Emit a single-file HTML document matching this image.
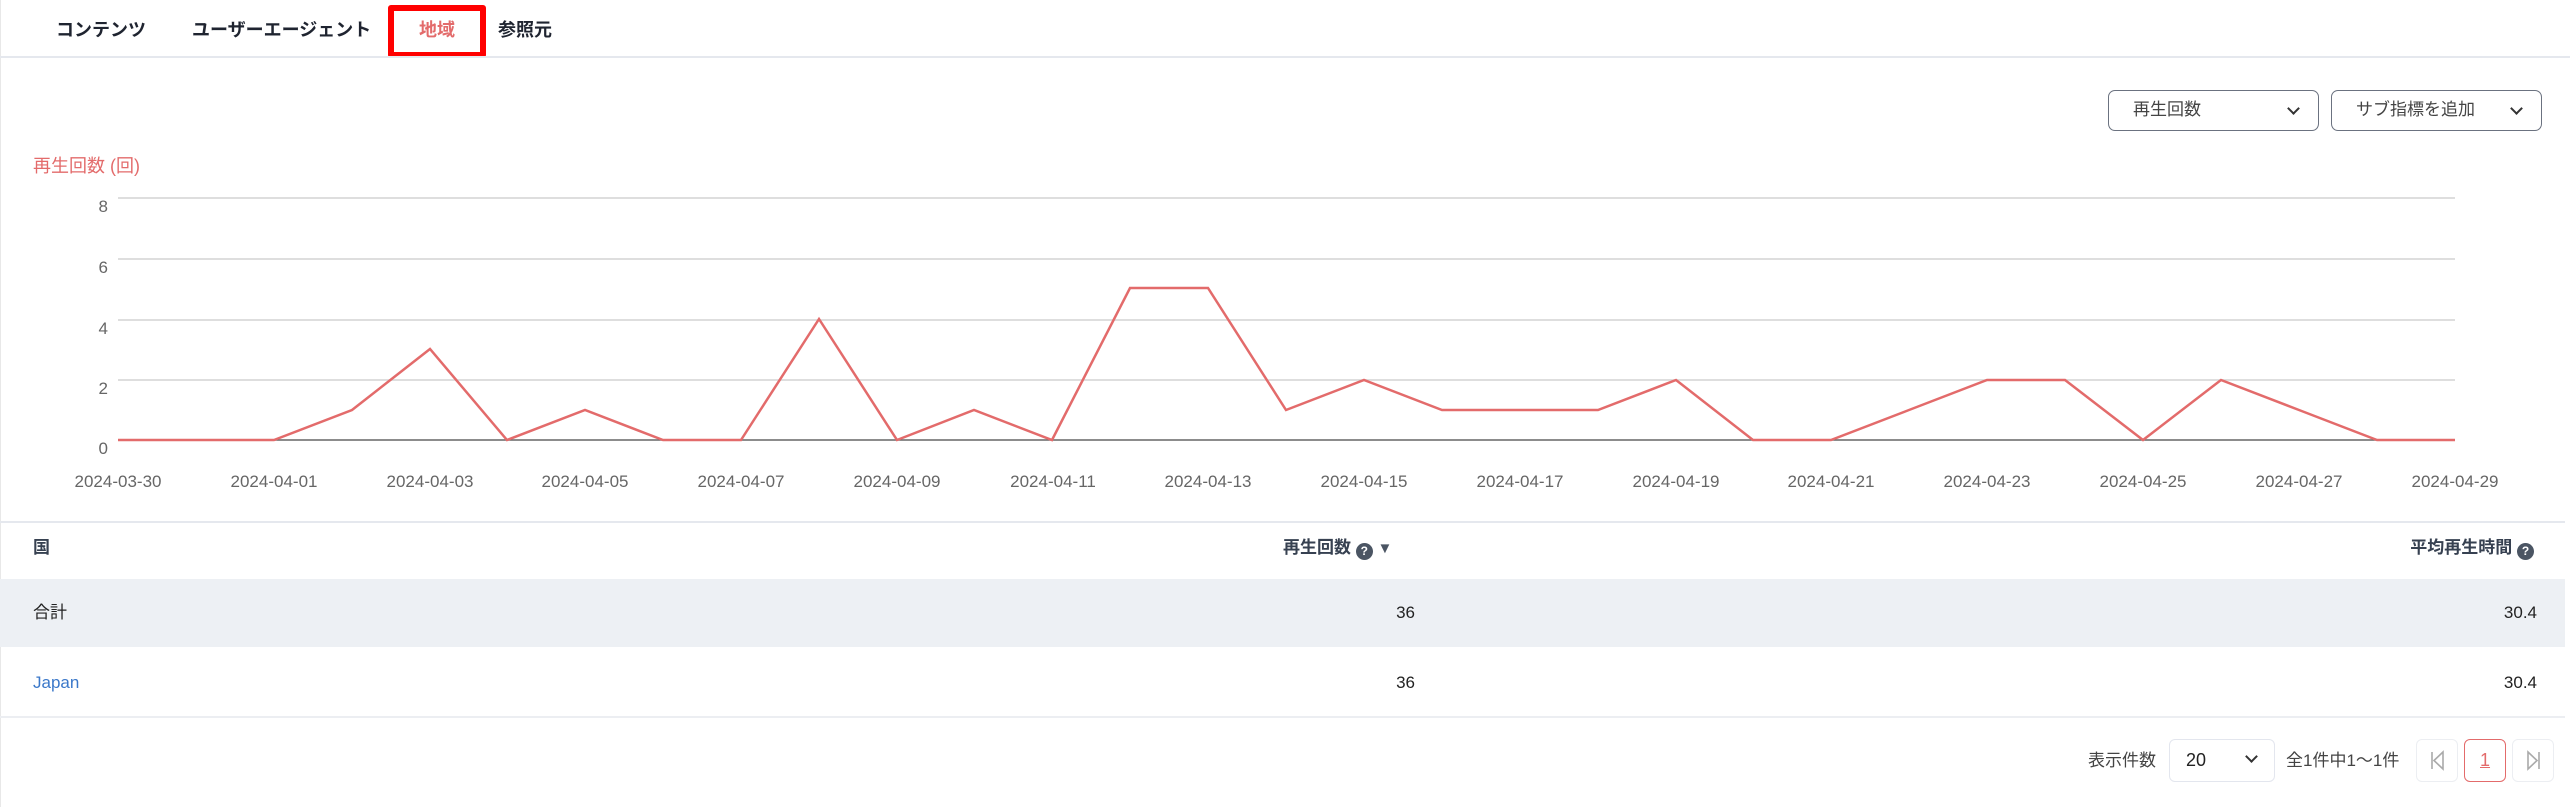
<!DOCTYPE html>
<html><head><meta charset="utf-8"><style>
*{margin:0;padding:0;box-sizing:border-box}
body{width:2570px;height:807px;background:#fff;font-family:"Liberation Sans","Noto Sans CJK JP",sans-serif;position:relative;overflow:hidden;color:#222}
.a{position:absolute;white-space:nowrap;line-height:24px}
.tab{font-size:18px;font-weight:bold;color:#1f2430;top:18px}
.dd{position:absolute;top:90px;height:41px;border:1.5px solid #6b7280;border-radius:7px;font-size:17px;color:#444;padding:7px 0 0 24px;line-height:24px}
.chev{position:absolute;right:20px;top:13px;width:9px;height:9px;border-right:2.5px solid #333;border-bottom:2.5px solid #333;transform:rotate(45deg)}
.q{display:inline-block;width:17px;height:17px;border-radius:50%;background:#4b5563;color:#fff;font-size:12px;text-align:center;line-height:17px;font-weight:bold;vertical-align:-2px}
.pb{position:absolute;top:739px;height:43px;border:1.5px solid #eceef2;border-radius:6px}
</style></head><body>
<div style="position:absolute;left:0;top:0;width:1px;height:807px;background:#e8e8e8"></div>
<div class="a tab" style="left:56px">コンテンツ</div>
<div class="a tab" style="left:192px">ユーザーエージェント</div>
<div class="a tab" style="left:419px;color:#e36b6b">地域</div>
<div class="a tab" style="left:498px">参照元</div>
<div style="position:absolute;left:388px;top:5px;width:98px;height:53px;border:6px solid #f00;border-radius:3px"></div>
<div style="position:absolute;left:0;top:56px;width:2570px;height:2px;background:#e5e8ee"></div>

<div class="dd" style="left:2108px;width:211px">再生回数<span class="chev"></span></div>
<div class="dd" style="left:2331px;width:211px">サブ指標を追加<span class="chev"></span></div>

<div class="a" style="left:33px;top:154px;font-size:18px;color:#e36b6b">再生回数 (回)</div>

<svg width="2570" height="520" style="position:absolute;left:0;top:0" font-family="Liberation Sans, sans-serif">
<g stroke="#d4d4d4" stroke-width="1.5">
<line x1="118" y1="198" x2="2455" y2="198"/><line x1="118" y1="259" x2="2455" y2="259"/><line x1="118" y1="320" x2="2455" y2="320"/><line x1="118" y1="380" x2="2455" y2="380"/></g>
<line x1="118" y1="440" x2="2455" y2="440" stroke="#666" stroke-width="1.5"/>
<g font-size="17" fill="#666" text-anchor="end">
<text x="108" y="212">8</text><text x="108" y="273">6</text><text x="108" y="334">4</text><text x="108" y="394">2</text><text x="108" y="454">0</text></g>
<g font-size="17" fill="#666" text-anchor="middle">
<text x="118" y="487">2024-03-30</text><text x="274" y="487">2024-04-01</text><text x="430" y="487">2024-04-03</text><text x="585" y="487">2024-04-05</text><text x="741" y="487">2024-04-07</text><text x="897" y="487">2024-04-09</text><text x="1053" y="487">2024-04-11</text><text x="1208" y="487">2024-04-13</text><text x="1364" y="487">2024-04-15</text><text x="1520" y="487">2024-04-17</text><text x="1676" y="487">2024-04-19</text><text x="1831" y="487">2024-04-21</text><text x="1987" y="487">2024-04-23</text><text x="2143" y="487">2024-04-25</text><text x="2299" y="487">2024-04-27</text><text x="2455" y="487">2024-04-29</text></g>
<polyline fill="none" stroke="#e36b6b" stroke-width="2.5" points="118,440 196,440 274,440 352,410 430,349 507,440 585,410 663,440 741,440 819,319 897,440 974,410 1052,440 1130,288 1208,288 1286,410 1364,380 1442,410 1520,410 1598,410 1676,380 1753,440 1831,440 1909,410 1987,380 2065,380 2143,440 2221,380 2299,410 2377,440 2455,440"/>
</svg>

<div style="position:absolute;left:0;top:521px;width:2565px;height:1.5px;background:#e5e8ee"></div>
<div class="a" style="left:33px;top:536px;font-size:17px;font-weight:bold;color:#374151">国</div>
<div class="a" style="left:1283px;top:536px;font-size:17px;font-weight:bold;color:#374151">再生回数 <span class="q">?</span> <span style="font-size:15px;color:#4b5563">▼</span></div>
<div class="a" style="right:36px;top:536px;font-size:17px;font-weight:bold;color:#374151">平均再生時間 <span class="q">?</span></div>
<div style="position:absolute;left:0;top:579px;width:2565px;height:68px;background:#edf0f4"></div>
<div class="a" style="left:33px;top:601px;font-size:17px">合計</div>
<div class="a" style="right:1155px;top:601px;font-size:17px">36</div>
<div class="a" style="right:33px;top:601px;font-size:17px">30.4</div>
<div class="a" style="left:33px;top:671px;font-size:17px;color:#3b78c9">Japan</div>
<div class="a" style="right:1155px;top:671px;font-size:17px">36</div>
<div class="a" style="right:33px;top:671px;font-size:17px">30.4</div>
<div style="position:absolute;left:0;top:716px;width:2565px;height:1.5px;background:#eceef2"></div>

<div class="a" style="left:2088px;top:749px;font-size:17px;color:#444">表示件数</div>
<div class="pb" style="left:2169px;width:106px;border-color:#e3e6ee"><span class="a" style="left:16px;top:8px;font-size:18px">20</span><span class="chev" style="right:18px;top:12px;width:9px;height:9px"></span></div>
<div class="a" style="left:2286px;top:749px;font-size:17px;color:#444">全1件中1〜1件</div>
<div class="pb" style="left:2416px;width:42px"><svg width="42" height="43" style="position:absolute;left:-1px;top:-1px"><path d="M16 13v17M27 13l-9 8.5 9 8.5z" fill="none" stroke="#aaa" stroke-width="1.6"/></svg></div>
<div class="pb" style="left:2464px;width:42px;border-color:#e36b6b"><span class="a" style="left:15px;top:8px;font-size:18px;color:#e36b6b;text-decoration:underline">1</span></div>
<div class="pb" style="left:2512px;width:42px"><svg width="42" height="43" style="position:absolute;left:-1px;top:-1px"><path d="M27 13v17M16 13l9 8.5-9 8.5z" fill="none" stroke="#aaa" stroke-width="1.6"/></svg></div>
</body></html>
